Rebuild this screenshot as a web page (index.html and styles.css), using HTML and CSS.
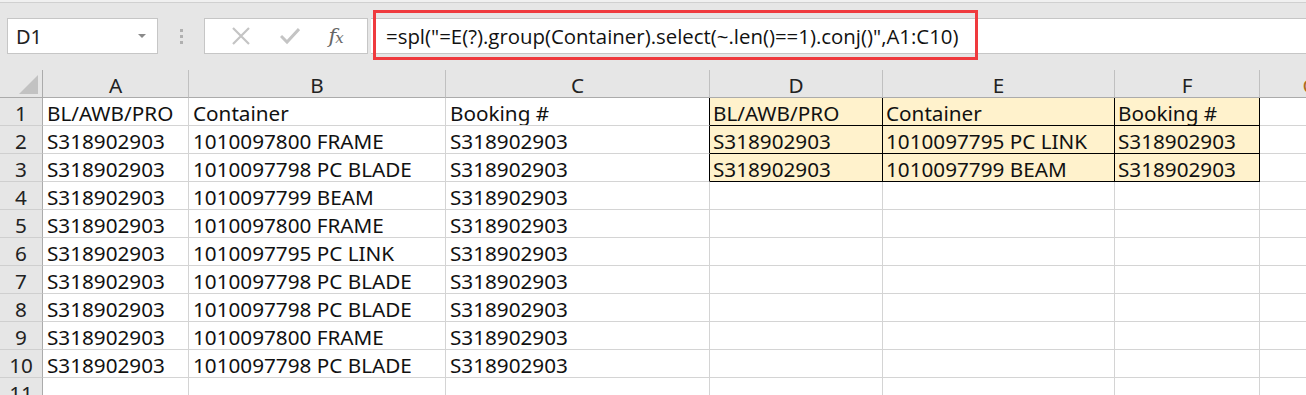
FILE: index.html
```html
<!DOCTYPE html>
<html lang="en">
<head>
  <meta charset="UTF-8" />
  <title>Sheet - Formula</title>
  <link rel="stylesheet" href="styles.css">
</head>
<body>
  <!-- Name box + formula bar -->
  <div class="toolbar">
    <div class="name-box">
      <span>D1</span>
      <svg class="caret" width="8" height="5" viewBox="0 0 8 5"><path d="M0 0 L8 0 L4 4 Z" fill="#8a8a8a"/></svg>
    </div>
    <div class="grip"><i></i><i></i><i></i></div>
    <div class="fx-buttons">
      <svg width="20" height="18" viewBox="0 0 20 18"><path d="M2 1 L18 17 M18 1 L2 17" stroke="#c4c4c4" stroke-width="2.2" fill="none"/></svg>
      <svg width="20" height="18" viewBox="0 0 20 18"><path d="M1 9 L7 15 L19 2" stroke="#c4c4c4" stroke-width="3" fill="none"/></svg>
      <span class="fx">f<sub>x</sub></span>
    </div>
    <div class="formula">=spl("=E(?).group(Container).select(~.len()==1).conj()",A1:C10)</div>
    <div class="mark"></div>
  </div>

  <!-- Grid -->
  <div class="sheet">
    <div class="corner"><svg width="19" height="19" viewBox="0 0 19 19"><path d="M19 0 L19 19 L0 19 Z" fill="#c2c2c2"/></svg></div>
    <div class="col-head">A</div>
    <div class="col-head">B</div>
    <div class="col-head">C</div>
    <div class="col-head">D</div>
    <div class="col-head">E</div>
    <div class="col-head">F</div>
    <div class="col-head g">G</div>

    <div class="row-head">1</div>
    <div class="cell">BL/AWB/PRO</div>
    <div class="cell">Container</div>
    <div class="cell edge">Booking #</div>
    <div class="cell hl">BL/AWB/PRO</div>
    <div class="cell hl">Container</div>
    <div class="cell hl">Booking #</div>
    <div class="cell"></div>

    <div class="row-head">2</div>
    <div class="cell">S318902903</div>
    <div class="cell">1010097800 FRAME</div>
    <div class="cell edge">S318902903</div>
    <div class="cell hl">S318902903</div>
    <div class="cell hl">1010097795 PC LINK</div>
    <div class="cell hl">S318902903</div>
    <div class="cell"></div>

    <div class="row-head">3</div>
    <div class="cell">S318902903</div>
    <div class="cell">1010097798 PC BLADE</div>
    <div class="cell edge">S318902903</div>
    <div class="cell hl">S318902903</div>
    <div class="cell hl">1010097799 BEAM</div>
    <div class="cell hl">S318902903</div>
    <div class="cell"></div>

    <div class="row-head">4</div>
    <div class="cell">S318902903</div>
    <div class="cell">1010097799 BEAM</div>
    <div class="cell">S318902903</div>
    <div class="cell"></div><div class="cell"></div><div class="cell"></div><div class="cell"></div>

    <div class="row-head">5</div>
    <div class="cell">S318902903</div>
    <div class="cell">1010097800 FRAME</div>
    <div class="cell">S318902903</div>
    <div class="cell"></div><div class="cell"></div><div class="cell"></div><div class="cell"></div>

    <div class="row-head">6</div>
    <div class="cell">S318902903</div>
    <div class="cell">1010097795 PC LINK</div>
    <div class="cell">S318902903</div>
    <div class="cell"></div><div class="cell"></div><div class="cell"></div><div class="cell"></div>

    <div class="row-head">7</div>
    <div class="cell">S318902903</div>
    <div class="cell">1010097798 PC BLADE</div>
    <div class="cell">S318902903</div>
    <div class="cell"></div><div class="cell"></div><div class="cell"></div><div class="cell"></div>

    <div class="row-head">8</div>
    <div class="cell">S318902903</div>
    <div class="cell">1010097798 PC BLADE</div>
    <div class="cell">S318902903</div>
    <div class="cell"></div><div class="cell"></div><div class="cell"></div><div class="cell"></div>

    <div class="row-head">9</div>
    <div class="cell">S318902903</div>
    <div class="cell">1010097800 FRAME</div>
    <div class="cell">S318902903</div>
    <div class="cell"></div><div class="cell"></div><div class="cell"></div><div class="cell"></div>

    <div class="row-head">10</div>
    <div class="cell">S318902903</div>
    <div class="cell">1010097798 PC BLADE</div>
    <div class="cell">S318902903</div>
    <div class="cell"></div><div class="cell"></div><div class="cell"></div><div class="cell"></div>

    <div class="row-head">11</div>
    <div class="cell"></div><div class="cell"></div><div class="cell"></div>
    <div class="cell"></div><div class="cell"></div><div class="cell"></div><div class="cell"></div>
  </div>
</body>
</html>
```

FILE: styles.css
```css
body {
  margin: 0;
  width: 1306px;
  height: 395px;
  overflow: hidden;
  background: #fff;
  font-family: "Noto Sans", "Noto Sans CJK SC", sans-serif;
  color: #111;
}

/* top bar */
.toolbar {
  position: relative;
  height: 70px;
  box-sizing: border-box;
  background: #e6e6e6;
  border-top: 3px solid #f0f0f0;
  display: flex;
  align-items: flex-start;
  padding-top: 15px;
  padding-left: 7px;
}

.toolbar::before {
  content: "";
  position: absolute;
  left: 0;
  right: 0;
  top: -1px;
  border-top: 1px solid #d0d0d0;
}

.name-box {
  width: 151px;
  height: 36px;
  box-sizing: border-box;
  background: #fff;
  border: 1px solid #c6c6c6;
  display: flex;
  align-items: center;
  justify-content: space-between;
  padding: 0 11px 0 8px;
  font-size: 20px;
  color: #222;
}

.grip {
  width: 46px;
  height: 36px;
  display: flex;
  flex-direction: column;
  align-items: center;
  justify-content: center;
  gap: 3px;
}

.grip i {
  width: 3px;
  height: 3px;
  background: #b0b0b0;
}

.fx-buttons {
  width: 164px;
  height: 36px;
  box-sizing: border-box;
  background: #fff;
  border: 1px solid #c6c6c6;
  display: flex;
  align-items: center;
  justify-content: space-around;
  padding: 0 10px 0 12px;
}

.fx {
  font-family: "DejaVu Serif", "Liberation Serif", serif;
  font-style: italic;
  font-size: 21px;
  color: #666;
  letter-spacing: -1px;
}

.fx sub {
  font-size: 15px;
  vertical-align: 0;
}

.formula {
  flex: 1;
  height: 36px;
  box-sizing: border-box;
  margin-left: 3px;
  background: #fff;
  border-top: 1px solid #c6c6c6;
  border-bottom: 1px solid #c6c6c6;
  padding-left: 15px;
  display: flex;
  align-items: center;
  font-family: "Open Sans", "Noto Sans", sans-serif;
  font-size: 20.4px;
  color: #111;
  white-space: nowrap;
}

/* red annotation box over the formula */
.mark {
  position: absolute;
  left: 373px;
  top: 7px;
  width: 605px;
  height: 50px;
  box-sizing: border-box;
  border: 3px solid #ef3a3e;
}

/* sheet grid */
.sheet {
  display: grid;
  grid-template-columns: 43px 146px 257px 264px 173px 232px 145px 101px;
  grid-template-rows: 28px repeat(11, 28px);
  font-size: 20.7px;
}

.sheet > div {
  box-sizing: border-box;
  white-space: nowrap;
  overflow: hidden;
}

.corner {
  background: #e6e6e6;
  border-right: 1px solid #ababab;
  border-bottom: 1px solid #ababab;
  display: flex;
  align-items: flex-end;
  justify-content: flex-end;
  padding: 0 4px 3px 0;
}

.col-head {
  background: #e6e6e6;
  border-right: 1px solid #c0c0c0;
  border-bottom: 1px solid #ababab;
  text-align: center;
  line-height: 31px;
  color: #222;
}

.col-head.g {
  color: #b06a1e;
}

.row-head {
  background: #e6e6e6;
  border-right: 1px solid #ababab;
  border-bottom: 1px solid #cfcfcf;
  text-align: center;
  line-height: 31px;
  color: #222;
}

.cell {
  border-right: 1px solid #d4d4d4;
  border-bottom: 1px solid #d4d4d4;
  padding-left: 4px;
  line-height: 31px;
}

.cell.edge {
  border-right-color: #000;
}

.cell.hl {
  background: #fff2cc;
  border-right-color: #000;
  border-bottom-color: #000;
  padding-left: 3px;
}
```
